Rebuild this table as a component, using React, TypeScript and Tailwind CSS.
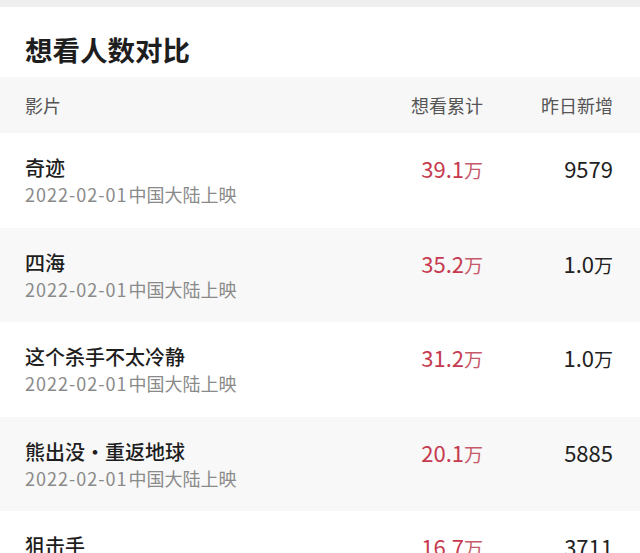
import React from "react";

const rows = [
  { name: "奇迹", total: "39.1", ytd: "9579", ytdWan: false },
  { name: "四海", total: "35.2", ytd: "1.0", ytdWan: true },
  { name: "这个杀手不太冷静", total: "31.2", ytd: "1.0", ytdWan: true },
  { name: "熊出没·重返地球", total: "20.1", ytd: "5885", ytdWan: false },
  { name: "狙击手", total: "16.7", ytd: "3711", ytdWan: false },
];

export default function App() {
  return (
    <div
      className="w-[640px] h-[553px] overflow-hidden bg-white"
      style={{ fontFamily: '"Noto Sans CJK SC", "Noto Sans", sans-serif' }}
    >
      <div className="h-[7px] bg-[#efefef]" />
      <div className="h-[70px] pt-[29px] pl-[25px]">
        <div className="text-[27.5px] font-bold text-[#1e1e1e] leading-none">想看人数对比</div>
      </div>
      <div className="h-[56px] bg-[#f7f7f7] flex items-center pl-[25px] pr-[27px] text-[18px] text-[#555]">
        <div className="flex-1">影片</div>
        <div className="w-[130px] text-right">想看累计</div>
        <div className="w-[130px] text-right">昨日新增</div>
      </div>
      {rows.map((r, i) => (
        <div
          key={i}
          className={`h-[94.5px] flex items-start pt-[22px] pl-[25px] pr-[27px] ${i % 2 === 1 ? "bg-[#f8f8f8]" : "bg-white"}`}
        >
          <div className="flex-1 flex flex-col">
            <span className="text-[20px] leading-[26px] font-medium text-[#1e1e1e]">{r.name}</span>
            <span className="text-[18px] leading-[26px] text-[#8a8a8a]">
              <span className="tracking-[1px]">2022-02-01</span>
              <span className="ml-[1px]">中国大陆上映</span>
            </span>
          </div>
          <div className="w-[130px] text-right leading-[26px]">
            <span className="text-[22px] text-[#c63a4f]">{r.total}</span>
            <span className="text-[19px] text-[#c65a6a]">万</span>
          </div>
          <div className="w-[130px] text-right leading-[26px] text-[#222]">
            <span className="text-[22px]">{r.ytd}</span>
            {r.ytdWan && <span className="text-[19px]">万</span>}
          </div>
        </div>
      ))}
    </div>
  );
}
